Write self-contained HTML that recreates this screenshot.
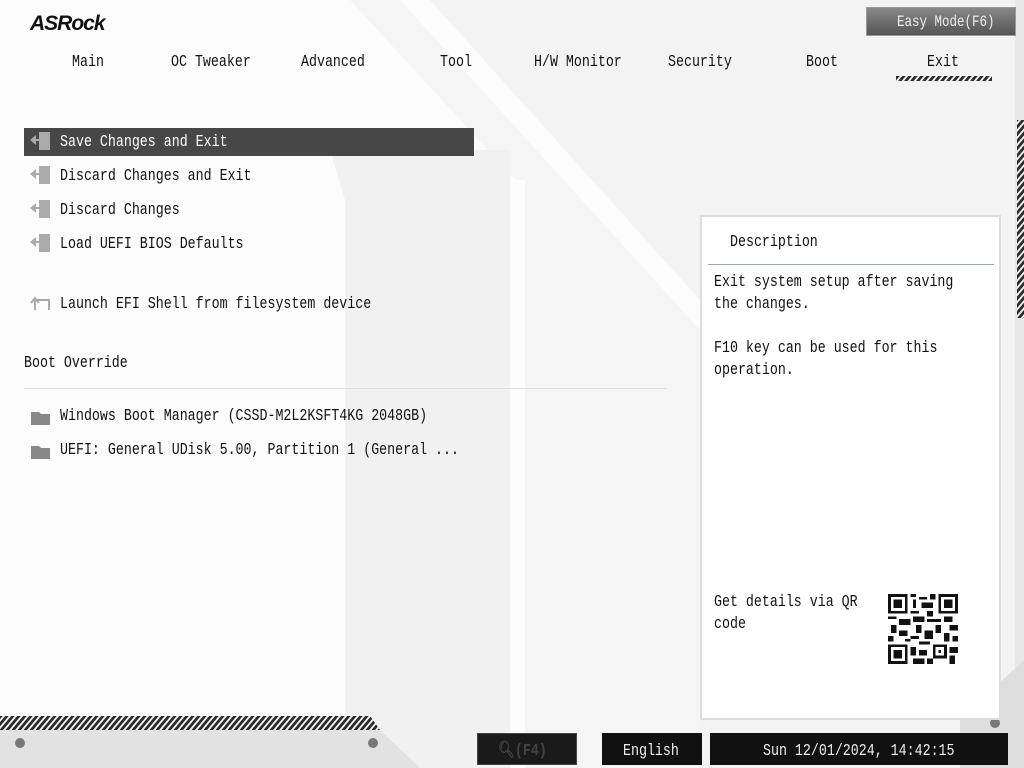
<!DOCTYPE html>
<html><head><meta charset="utf-8"><style>
*{margin:0;padding:0;box-sizing:border-box}
body{width:1024px;height:768px;overflow:hidden;background:#efefef;position:relative;font-family:"Liberation Mono","DejaVu Sans Mono",monospace;color:#111}
.t{position:absolute;font-size:13.3px;line-height:16px;white-space:pre;transform:scaleY(1.25);transform-origin:0 50%;margin-top:1px}
.abs{position:absolute}
</style></head><body>
<svg class="abs" style="left:0;top:0" width="1024" height="768">
<defs><pattern id="h" width="6" height="6" patternUnits="userSpaceOnUse" patternTransform="skewX(-40)"><rect width="6" height="6" fill="#eee"/><rect width="3.5" height="6" fill="#2a2a2a"/></pattern></defs>
<rect width="1024" height="768" fill="#f3f3f3"/>
<polygon points="0,0 430,0 700,300 700,768 0,768" fill="#fcfcfc"/>
<polygon points="330,0 400,0 700,330 700,768 520,768 520,185 350,0" fill="#f5f5f5"/>
<polygon points="330,150 510,150 510,768 345,768 345,200" fill="#f1f1f1"/>
<polygon points="510,180 525,180 525,768 510,768" fill="#fdfdfd"/>
<polygon points="1015,0 1024,0 1024,768 1015,768" fill="#e8e8e8"/>
<rect x="1017" y="120" width="7" height="198" fill="url(#h)"/>
<polygon points="0,730 380,730 420,768 0,768" fill="#e2e2e2"/>
<polygon points="0,716 370,716 380,730 0,730" fill="url(#h)"/>
<polygon points="960,720 1024,660 1024,768 960,768" fill="#dedede"/>
<circle cx="20" cy="743" r="5" fill="#777"/><circle cx="373" cy="743" r="5" fill="#777"/><circle cx="995" cy="723" r="5" fill="#777"/>
<rect x="896" y="76" width="96" height="5" fill="url(#h)"/>
</svg>
<svg class="abs" style="top:12px;left:30px" width="92" height="22"><text x="0" y="18" font-family="Liberation Sans" font-weight="bold" font-style="italic" font-size="21" fill="#111" letter-spacing="-1">ASRock</text></svg>
<div class="abs" style="left:866px;top:7px;width:150px;height:29px;background:linear-gradient(#888,#555);border:1px solid #999"></div>
<div class="t" style="left:897px;top:13px;color:#eee;font-size:12.5px">Easy Mode(F6)</div>
<div class="t" style="left:72px;top:53px">Main</div>
<div class="t" style="left:171px;top:53px">OC Tweaker</div>
<div class="t" style="left:301px;top:53px">Advanced</div>
<div class="t" style="left:440px;top:53px">Tool</div>
<div class="t" style="left:534px;top:53px">H/W Monitor</div>
<div class="t" style="left:668px;top:53px">Security</div>
<div class="t" style="left:806px;top:53px">Boot</div>
<div class="t" style="left:927px;top:53px">Exit</div>
<div class="abs" style="left:24px;top:128px;width:450px;height:28px;background:#474747"></div>
<div class="t" style="left:60px;top:133px;color:#fff">Save Changes and Exit</div>
<div class="t" style="left:60px;top:167px">Discard Changes and Exit</div>
<div class="t" style="left:60px;top:201px">Discard Changes</div>
<div class="t" style="left:60px;top:235px">Load UEFI BIOS Defaults</div>
<div class="t" style="left:60px;top:295px">Launch EFI Shell from filesystem device</div>
<div class="t" style="left:24px;top:354px">Boot Override</div>
<div class="abs" style="left:24px;top:388px;width:642px;height:1px;background:#ddd"></div>
<div class="t" style="left:60px;top:407px">Windows Boot Manager (CSSD-M2L2KSFT4KG 2048GB)</div>
<div class="t" style="left:60px;top:441px">UEFI: General UDisk 5.00, Partition 1 (General ...</div>
<svg class="abs" style="left:30px;top:130px" width="24" height="330">
<g fill="#aaa"><rect x="9" y="2" width="11" height="18"/><polygon points="0,10 6,5 6,15"/><rect x="4" y="9" width="6" height="2"/></g>
<g fill="#aaa" transform="translate(0,34)"><rect x="9" y="2" width="11" height="18"/><polygon points="0,10 6,5 6,15"/><rect x="4" y="9" width="6" height="2"/></g>
<g fill="#aaa" transform="translate(0,68)"><rect x="9" y="2" width="11" height="18"/><polygon points="0,10 6,5 6,15"/><rect x="4" y="9" width="6" height="2"/></g>
<g fill="#aaa" transform="translate(0,102)"><rect x="9" y="2" width="11" height="18"/><polygon points="0,10 6,5 6,15"/><rect x="4" y="9" width="6" height="2"/></g>
<g fill="none" stroke="#aaa" stroke-width="2" transform="translate(0,162)"><path d="M5,18 V8 H19 V18"/><path d="M1,11 L5,6 L9,11"/></g>
<g fill="#888" transform="translate(0,276)"><path d="M1,6 H9 L11,8 H20 V19 H1Z"/></g>
<g fill="#888" transform="translate(0,310)"><path d="M1,6 H9 L11,8 H20 V19 H1Z"/></g>
</svg>
<div class="abs" style="left:700px;top:215px;width:301px;height:505px;border:2px solid #ddd;background:#fff"></div>
<div class="abs" style="left:708px;top:264px;width:286px;height:1px;background:#9aa"></div>
<div class="t" style="left:730px;top:233px">Description</div>
<div class="t" style="left:714px;top:273px">Exit system setup after saving</div>
<div class="t" style="left:714px;top:295px">the changes.</div>
<div class="t" style="left:714px;top:339px">F10 key can be used for this</div>
<div class="t" style="left:714px;top:361px">operation.</div>
<div class="t" style="left:714px;top:593px">Get details via QR</div>
<div class="t" style="left:714px;top:615px">code</div>
<svg class="abs" style="left:888px;top:594px" width="70" height="70" viewBox="0 0 25 25" shape-rendering="crispEdges">
<g fill="#111">
<path d="M0,0h7v7h-7zM1,1v5h5v-5zM2,2h3v3h-3z" fill-rule="evenodd"/>
<path d="M18,0h7v7h-7zM19,1v5h5v-5zM20,2h3v3h-3z" fill-rule="evenodd"/>
<path d="M0,18h7v7h-7zM1,19v5h5v-5zM2,20h3v3h-3z" fill-rule="evenodd"/>
<rect x="8" y="0" width="2" height="1"/><rect x="11" y="1" width="3" height="1"/><rect x="9" y="2" width="1" height="3"/><rect x="12" y="3" width="4" height="2"/><rect x="15" y="0" width="2" height="2"/><rect x="8" y="6" width="3" height="1"/><rect x="14" y="6" width="2" height="2"/>
<rect x="0" y="8" width="3" height="1"/><rect x="4" y="9" width="4" height="2"/><rect x="1" y="11" width="2" height="3"/><rect x="9" y="8" width="4" height="2"/><rect x="10" y="11" width="2" height="3"/><rect x="14" y="9" width="5" height="1"/><rect x="20" y="8" width="3" height="2"/><rect x="17" y="11" width="2" height="3"/><rect x="22" y="11" width="3" height="2"/>
<rect x="4" y="13" width="3" height="2"/><rect x="0" y="15" width="2" height="2"/><rect x="8" y="15" width="3" height="1"/><rect x="13" y="13" width="3" height="3"/><rect x="20" y="14" width="2" height="3"/><rect x="23" y="15" width="2" height="2"/><rect x="6" y="16" width="2" height="1"/><rect x="11" y="17" width="4" height="1"/>
<rect x="8" y="19" width="2" height="3"/><rect x="11" y="20" width="3" height="2"/><rect x="16" y="18" width="5" height="5"/><rect x="17" y="19" width="3" height="3" fill="#fff"/><rect x="18" y="20" width="1" height="1"/><rect x="22" y="19" width="3" height="2"/><rect x="9" y="23" width="4" height="2"/><rect x="14" y="23" width="2" height="2"/><rect x="22" y="22" width="2" height="3"/>
</g></svg>
<div class="abs" style="left:477px;top:733px;width:100px;height:32px;background:#1a1a1a;border:1px solid #444"></div>
<div class="t" style="left:498px;top:742px;color:#444;font-weight:bold">🔍︎(F4)</div>
<div class="abs" style="left:602px;top:733px;width:100px;height:32px;background:#111"></div>
<div class="t" style="left:623px;top:742px;color:#eee">English</div>
<div class="abs" style="left:710px;top:733px;width:298px;height:32px;background:#111"></div>
<div class="t" style="left:763px;top:742px;color:#eee">Sun 12/01/2024, 14:42:15</div>
</body></html>
